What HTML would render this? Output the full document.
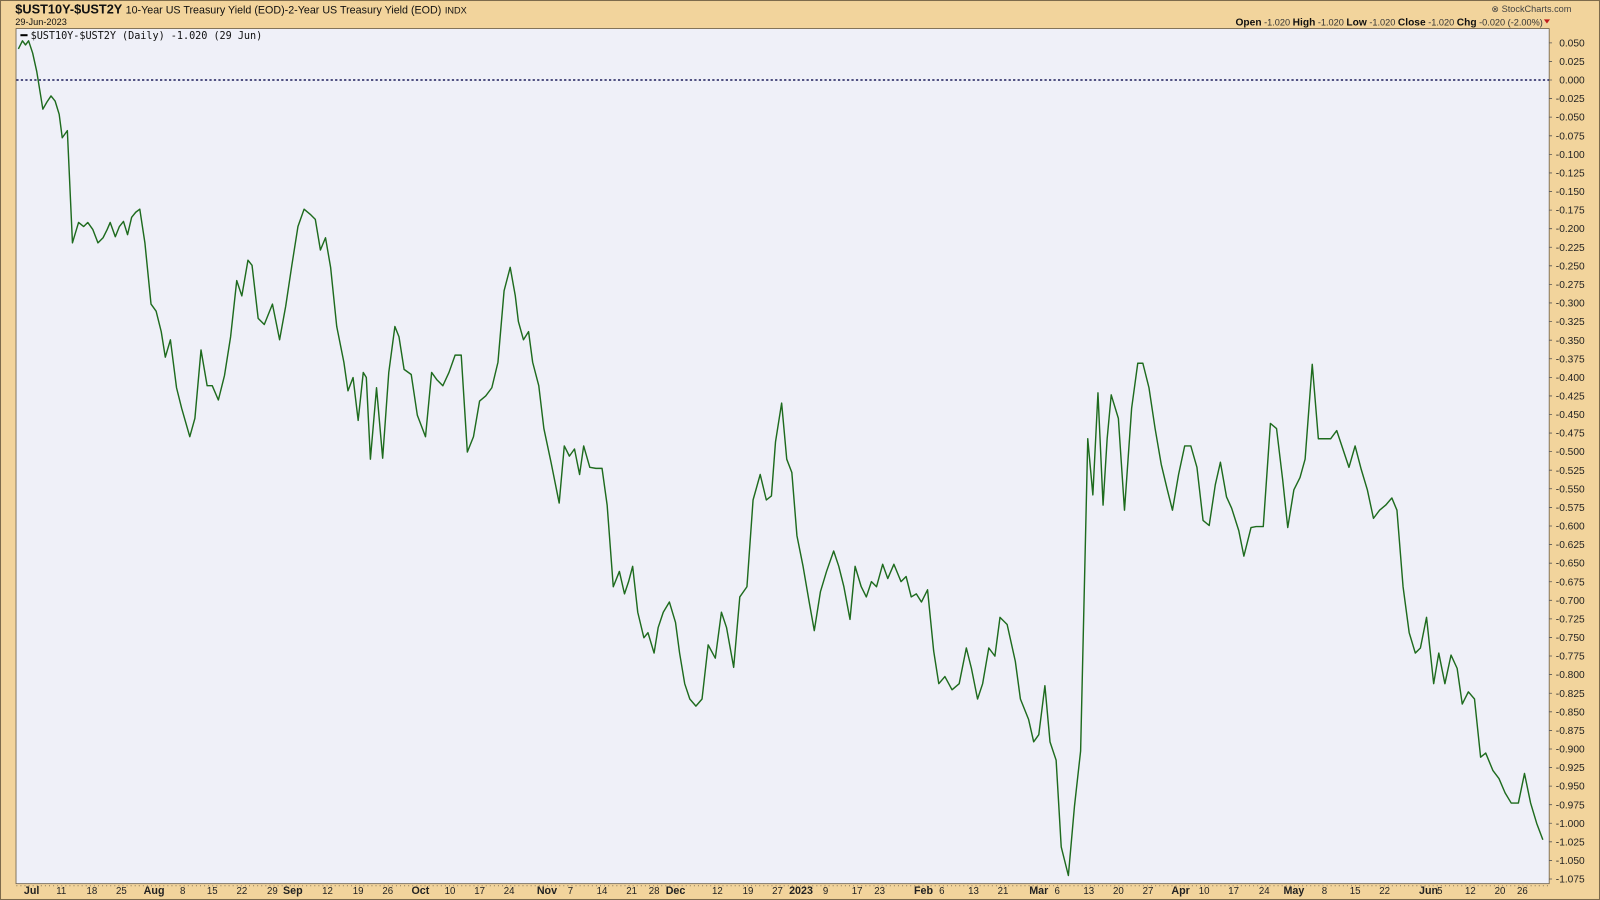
<!DOCTYPE html>
<html><head><meta charset="utf-8"><style>
html,body{margin:0;padding:0;width:1600px;height:900px;overflow:hidden;background:#f2d49c}
svg{display:block}
text{font-family:"Liberation Sans",Arial,sans-serif}
</style></head><body>
<svg width="1600" height="900" viewBox="0 0 1568 882" preserveAspectRatio="none" xmlns="http://www.w3.org/2000/svg">
<rect x="0.5" y="0.5" width="1567" height="881" fill="#f2d49c" stroke="#7d6b4c" stroke-width="1"/>
<text x="15" y="13" font-size="12.5" font-weight="bold" fill="#111">$UST10Y-$UST2Y <tspan font-weight="normal" font-size="10.5">10-Year US Treasury Yield (EOD)-2-Year US Treasury Yield (EOD)</tspan> <tspan font-weight="normal" font-size="9">INDX</tspan></text>
<text x="15" y="24.5" font-size="9" fill="#111">29-Jun-2023</text>
<text x="1540" y="12" font-size="9" fill="#444" text-anchor="end">⊗ StockCharts.com</text>
<text x="1512" y="25" font-size="9" fill="#333" text-anchor="end"><tspan font-weight="bold" font-size="10" fill="#111">Open</tspan> -1.020  <tspan font-weight="bold" font-size="10" fill="#111">High</tspan> -1.020  <tspan font-weight="bold" font-size="10" fill="#111">Low</tspan> -1.020  <tspan font-weight="bold" font-size="10" fill="#111">Close</tspan> -1.020  <tspan font-weight="bold" font-size="10" fill="#111">Chg</tspan> -0.020 (-2.00%)</text>
<path d="M1513 19 L1519 19 L1516 23 Z" fill="#c0191c"/>
<rect x="15.7" y="28" width="1502.5" height="838" fill="#eff0f8" stroke="#6b5f4a" stroke-width="0.8"/>
<line x1="16" y1="78.4" x2="1518" y2="78.4" stroke="#1c1c5a" stroke-width="1.4" stroke-dasharray="2.2,2.2"/>
<line x1="20" y1="34.5" x2="27" y2="34.5" stroke="#000" stroke-width="2"/>
<text x="30" y="38" font-size="10" fill="#111" style="font-family:'DejaVu Sans Mono',monospace" textLength="227">$UST10Y-$UST2Y (Daily) -1.020 (29 Jun)</text>
<polyline fill="none" stroke="#1e6b1e" stroke-width="1.4" stroke-linejoin="round" points="18,48 22,40 25,44 28,40 32,52 36,70 42,107 46,100 50,94 54,99 58,112 61,135 66,128 71,238 77,218 82,222 86,218 91,225 96,238 101,233 105,225 108,218 113,232 117,222 121,217 125,230 129,213 133,208 137,205 142,238 148,298 153,305 158,325 162,350 167,333 173,380 178,400 186,428 191,410 197,343 203,378 208,378 214,392 220,368 226,330 232,275 237,290 243,255 247,260 253,312 259,318 267,298 274,333 280,300 286,260 292,222 298,205 304,210 309,215 314,245 319,233 324,262 330,320 337,355 341,383 346,370 351,412 356,365 359,370 363,450 369,380 375,449 381,365 387,320 391,330 396,362 403,367 409,407 417,428 423,365 428,372 434,378 440,365 446,348 452,348 458,443 464,428 470,393 476,388 482,380 488,355 494,285 500,262 505,290 508,315 513,333 518,325 522,355 528,378 533,420 540,453 548,493 553,437 558,447 563,440 568,465 572,437 578,458 584,459 590,459 595,495 601,575 607,560 612,582 616,570 620,555 625,600 631,625 635,620 641,640 645,615 650,600 656,590 662,610 666,640 671,670 676,685 682,692 688,685 694,632 701,645 707,600 712,615 719,654 725,585 732,575 738,490 745,465 751,490 756,486 760,433 766,395 771,450 776,463 781,525 787,555 793,590 798,618 804,580 810,560 817,540 822,555 827,575 833,607 838,555 844,575 849,585 854,570 859,575 865,553 870,567 876,553 883,570 888,565 893,585 898,582 903,590 909,578 915,638 920,670 926,663 933,676 940,670 947,635 952,655 958,685 963,670 969,635 975,643 980,605 987,612 995,648 1000,685 1008,705 1013,727 1018,720 1024,672 1029,727 1035,745 1040,830 1047,858 1053,790 1059,736 1066,430 1071,485 1076,385 1081,495 1085,430 1089,387 1096,410 1102,500 1109,400 1115,356 1120,356 1126,380 1132,420 1138,455 1144,480 1149,500 1155,465 1161,437 1167,437 1173,458 1179,510 1185,515 1191,475 1196,453 1202,487 1207,498 1214,520 1219,545 1226,517 1231,516 1238,516 1245,415 1251,420 1257,470 1262,517 1268,480 1274,468 1279,450 1286,357 1292,430 1298,430 1304,430 1310,422 1316,440 1322,458 1328,437 1334,460 1340,480 1346,508 1352,500 1358,495 1364,488 1369,500 1375,575 1381,620 1387,640 1392,635 1398,605 1405,670 1410,640 1416,670 1422,642 1428,655 1433,690 1439,678 1445,685 1451,742 1456,738 1463,755 1469,763 1475,777 1481,787 1488,787 1494,758 1500,787 1506,807 1512,823"/>
<g stroke="#555" stroke-width="0.8">
<path d="M1518 42h3M1518 60.2h3M1518 78.4h3M1518 96.6h3M1518 114.8h3M1518 133.1h3M1518 151.3h3M1518 169.5h3M1518 187.7h3M1518 205.9h3M1518 224.1h3M1518 242.3h3M1518 260.5h3M1518 278.7h3M1518 296.9h3M1518 315.2h3M1518 333.4h3M1518 351.6h3M1518 369.8h3M1518 388h3M1518 406.2h3M1518 424.4h3M1518 442.6h3M1518 460.8h3M1518 479h3M1518 497.3h3M1518 515.5h3M1518 533.7h3M1518 551.9h3M1518 570.1h3M1518 588.3h3M1518 606.5h3M1518 624.7h3M1518 642.9h3M1518 661.1h3M1518 679.4h3M1518 697.6h3M1518 715.8h3M1518 734h3M1518 752.2h3M1518 770.4h3M1518 788.6h3M1518 806.8h3M1518 825h3M1518 843.2h3M1518 861.4h3"/>
</g>
<g font-size="10" fill="#222" text-anchor="end">
<text x="1553" y="45.5">0.050</text><text x="1553" y="63.7">0.025</text><text x="1553" y="81.9">0.000</text><text x="1553" y="100.1">-0.025</text><text x="1553" y="118.3">-0.050</text><text x="1553" y="136.6">-0.075</text><text x="1553" y="154.8">-0.100</text><text x="1553" y="173">-0.125</text><text x="1553" y="191.2">-0.150</text><text x="1553" y="209.4">-0.175</text><text x="1553" y="227.6">-0.200</text><text x="1553" y="245.8">-0.225</text><text x="1553" y="264">-0.250</text><text x="1553" y="282.2">-0.275</text><text x="1553" y="300.4">-0.300</text><text x="1553" y="318.7">-0.325</text><text x="1553" y="336.9">-0.350</text><text x="1553" y="355.1">-0.375</text><text x="1553" y="373.3">-0.400</text><text x="1553" y="391.5">-0.425</text><text x="1553" y="409.7">-0.450</text><text x="1553" y="427.9">-0.475</text><text x="1553" y="446.1">-0.500</text><text x="1553" y="464.3">-0.525</text><text x="1553" y="482.5">-0.550</text><text x="1553" y="500.8">-0.575</text><text x="1553" y="519">-0.600</text><text x="1553" y="537.2">-0.625</text><text x="1553" y="555.4">-0.650</text><text x="1553" y="573.6">-0.675</text><text x="1553" y="591.8">-0.700</text><text x="1553" y="610">-0.725</text><text x="1553" y="628.2">-0.750</text><text x="1553" y="646.4">-0.775</text><text x="1553" y="664.6">-0.800</text><text x="1553" y="682.9">-0.825</text><text x="1553" y="701.1">-0.850</text><text x="1553" y="719.3">-0.875</text><text x="1553" y="737.5">-0.900</text><text x="1553" y="755.7">-0.925</text><text x="1553" y="773.9">-0.950</text><text x="1553" y="792.1">-0.975</text><text x="1553" y="810.3">-1.000</text><text x="1553" y="828.5">-1.025</text><text x="1553" y="846.7">-1.050</text><text x="1553" y="864.9">-1.075</text>
</g>
<line x1="16" y1="868" x2="1518" y2="868" stroke="#8a7a5a" stroke-width="1" stroke-dasharray="1,3"/>
<g font-size="9.5" fill="#222" text-anchor="middle">
<text x="31" y="876" font-weight="bold" font-size="10.5">Jul</text><text x="60" y="876">11</text><text x="90" y="876">18</text><text x="119" y="876">25</text><text x="151" y="876" font-weight="bold" font-size="10.5">Aug</text><text x="179" y="876">8</text><text x="208" y="876">15</text><text x="237" y="876">22</text><text x="267" y="876">29</text><text x="287" y="876" font-weight="bold" font-size="10.5">Sep</text><text x="321" y="876">12</text><text x="351" y="876">19</text><text x="380" y="876">26</text><text x="412" y="876" font-weight="bold" font-size="10.5">Oct</text><text x="441" y="876">10</text><text x="470" y="876">17</text><text x="499" y="876">24</text><text x="536" y="876" font-weight="bold" font-size="10.5">Nov</text><text x="559" y="876">7</text><text x="590" y="876">14</text><text x="619" y="876">21</text><text x="641" y="876">28</text><text x="662" y="876" font-weight="bold" font-size="10.5">Dec</text><text x="703" y="876">12</text><text x="733" y="876">19</text><text x="762" y="876">27</text><text x="785" y="876" font-weight="bold" font-size="10.5">2023</text><text x="809" y="876">9</text><text x="840" y="876">17</text><text x="862" y="876">23</text><text x="905" y="876" font-weight="bold" font-size="10.5">Feb</text><text x="923" y="876">6</text><text x="954" y="876">13</text><text x="983" y="876">21</text><text x="1018" y="876" font-weight="bold" font-size="10.5">Mar</text><text x="1036" y="876">6</text><text x="1067" y="876">13</text><text x="1096" y="876">20</text><text x="1125" y="876">27</text><text x="1157" y="876" font-weight="bold" font-size="10.5">Apr</text><text x="1180" y="876">10</text><text x="1209" y="876">17</text><text x="1239" y="876">24</text><text x="1268" y="876" font-weight="bold" font-size="10.5">May</text><text x="1298" y="876">8</text><text x="1328" y="876">15</text><text x="1357" y="876">22</text><text x="1400" y="876" font-weight="bold" font-size="10.5">Jun</text><text x="1411" y="876">5</text><text x="1441" y="876">12</text><text x="1470" y="876">20</text><text x="1492" y="876">26</text>
</g>
</svg>
</body></html>
